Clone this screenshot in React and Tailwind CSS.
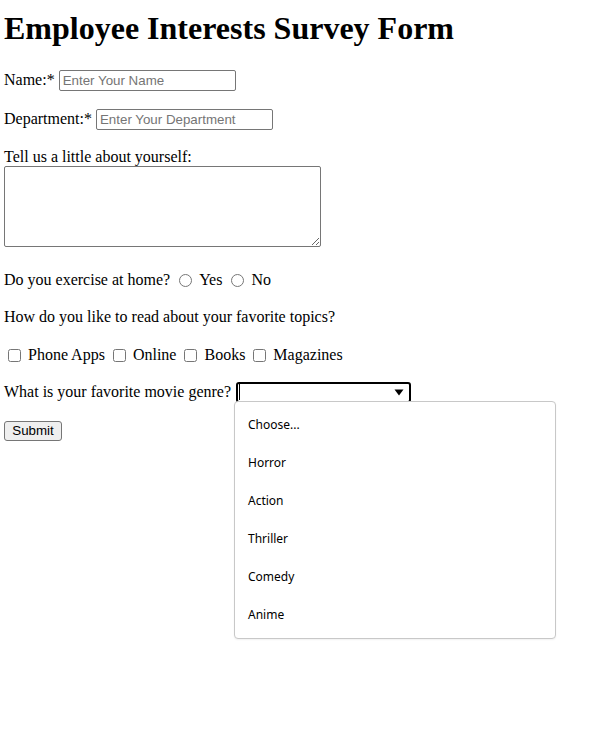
import React from 'react';

const GENRES = ['Choose...', 'Horror', 'Action', 'Thriller', 'Comedy', 'Anime'];

const fieldCls =
  "h-[21px] w-[177px] rounded-[2px] border border-[#767676] bg-white px-[3px] font-['Liberation_Sans',Arial,sans-serif] text-[13.33px] text-black placeholder:text-[#757575] outline-none";

function Radio({ name }) {
  return <input type="radio" name={name} className="m-0 ml-[9px] mr-[7px] h-[13px] w-[13px]" />;
}

function Check({ first }) {
  return (
    <input
      type="checkbox"
      className={first ? 'm-0 ml-[4px] mr-[7px] h-[13px] w-[13px]' : 'm-0 ml-[8px] mr-[7px] h-[13px] w-[13px]'}
    />
  );
}

export default function App() {
  return (
    <div className="relative min-h-[739px] bg-white px-1 pt-[10px] font-['Liberation_Serif',serif] text-[16px] text-black">
      <h1 className="text-[32px] font-bold leading-[37px]">Employee Interests Survey Form</h1>

      <form onSubmit={(e) => e.preventDefault()}>
        {/* name */}
        <div className="mt-[22px] flex h-[22px] items-center">
          <label htmlFor="name">Name:*</label>
          <input id="name" className={`ml-[4px] ${fieldCls}`} placeholder="Enter Your Name" />
        </div>

        {/* department */}
        <div className="mt-[17px] flex h-[22px] items-center">
          <label htmlFor="dept">Department:*</label>
          <input id="dept" className={`ml-[4px] ${fieldCls}`} placeholder="Enter Your Department" />
        </div>

        {/* about */}
        <label htmlFor="about" className="mt-[18px] block leading-[18px]">
          Tell us a little about yourself:
        </label>
        <textarea
          id="about"
          className="block h-[81px] w-[317px] resize rounded-[2px] border border-[#767676] bg-white"
        />

        {/* exercise */}
        <div className="mt-[22px] flex h-[22px] items-center">
          <span>Do you exercise at home?</span>
          <Radio name="exercise" />
          <span>Yes</span>
          <Radio name="exercise" />
          <span>No</span>
        </div>

        <div className="mt-[15px] flex h-[22px] items-center">How do you like to read about your favorite topics?</div>

        {/* reading */}
        <div className="mt-[16px] flex h-[22px] items-center">
          <Check first />
          <span>Phone Apps</span>
          <Check />
          <span>Online</span>
          <Check />
          <span>Books</span>
          <Check />
          <span>Magazines</span>
        </div>

        {/* genre */}
        <div className="mt-[15px] flex h-[22px] items-center">
          <span>What is your favorite movie genre?</span>
          <div className="ml-[5px] flex h-[21px] w-[175px] items-center justify-between rounded-[3px] border-2 border-black bg-white">
            <span className="ml-[1px] h-[16px] w-px bg-black" />
            <svg width="10" height="7" viewBox="0 0 10 7" className="mr-[5px]">
              <path d="M0.5 0.5 H9.5 L5 6.5 Z" fill="#000" />
            </svg>
          </div>
        </div>

        <div className="mt-[17px] flex h-[22px] items-center">
          <button
            type="submit"
            className="flex h-[20px] w-[58px] items-center justify-center rounded-[3px] border border-[#767676] bg-[#efefef] font-['Liberation_Sans',Arial,sans-serif] text-[13.33px] leading-[16px] text-black"
          >
            Submit
          </button>
        </div>
      </form>

      {/* open select list */}
      <div className="absolute left-[234px] top-[401px] w-[322px] rounded-[4px] border border-[#c8c8c8] bg-white py-[4px] font-['Noto_Sans','Open_Sans',sans-serif] text-[12px] text-black shadow-[0_1px_2px_rgba(0,0,0,0.06)]">
        {GENRES.map((g) => (
          <div key={g} className="flex h-[38px] items-center pl-[13px]">
            {g}
          </div>
        ))}
      </div>
    </div>
  );
}
